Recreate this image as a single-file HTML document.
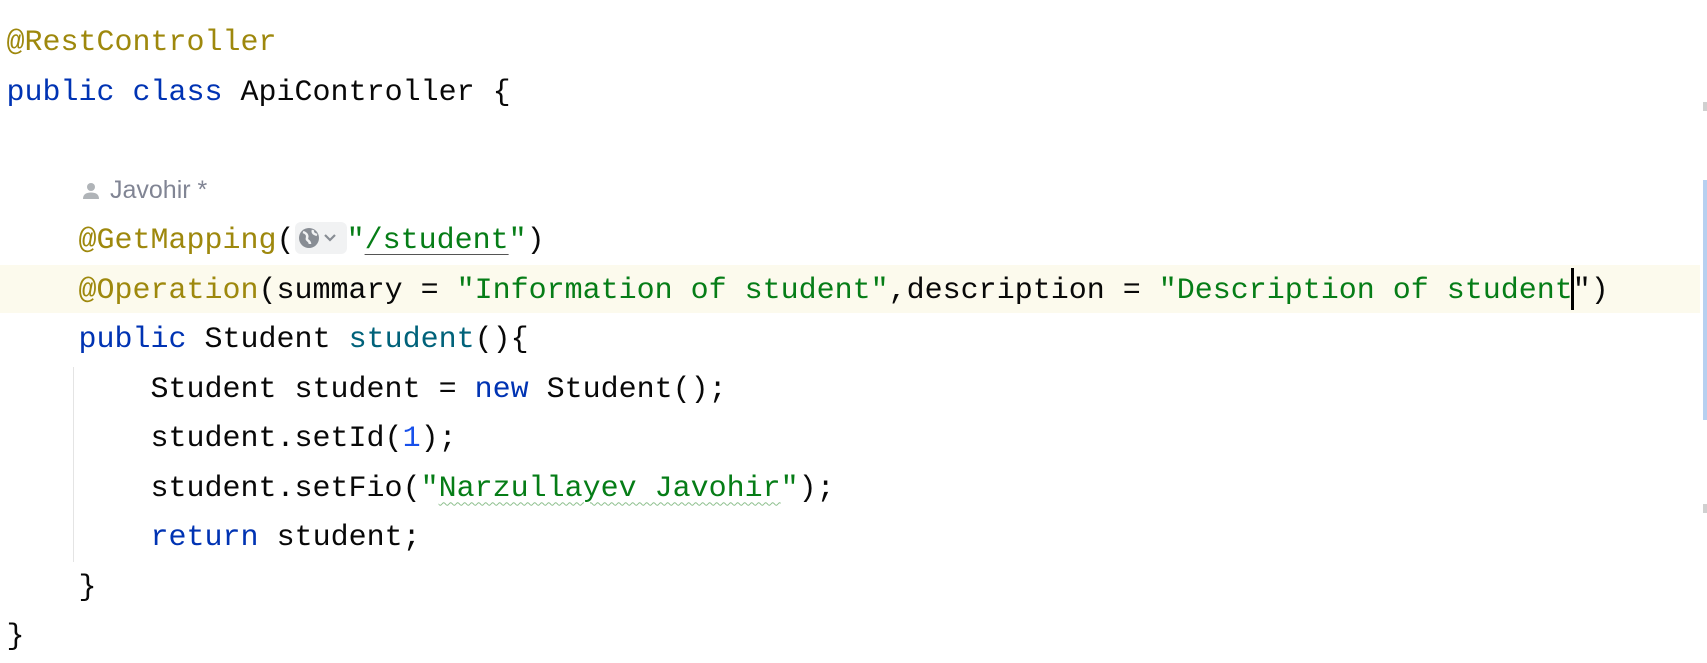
<!DOCTYPE html>
<html><head><style>
html,body{margin:0;padding:0;background:#fff;width:1707px;height:662px;overflow:hidden}
.l{position:absolute;left:6.5px;height:49.5px;line-height:49.5px;font-family:"Liberation Mono",monospace;font-size:30px;color:#080808;white-space:pre}
.a{color:#9E880D}.k{color:#0033B3}.s{color:#067D17}.n{color:#1750EB}.m{color:#00627A}
.hl{position:absolute;left:0;width:1700px;top:264.5px;height:48px;background:#FCFAED}
.wav{text-decoration:underline wavy #8dbf8d;text-decoration-thickness:1px;text-underline-offset:6px}
</style></head><body>
<div class="hl"></div>
<div class="l a" style="top:19px">@RestController</div>
<div class="l" style="top:68.5px"><span class="k">public class </span>ApiController {</div>
<div style="position:absolute;left:82px;top:182px;width:18px;height:18px">
<svg width="18" height="18" viewBox="0 0 18 18"><circle cx="9" cy="5" r="4" fill="#b0b4b8"/><path d="M1 17c0-5 3.5-6.5 8-6.5s8 1.5 8 6.5z" fill="#b0b4b8"/></svg></div>
<div style="position:absolute;left:110px;top:176px;font-family:'Liberation Sans',sans-serif;font-size:25px;color:#818594">Javohir *</div>
<div class="l" style="top:217px"><span class="a">    @GetMapping</span>(<span style="display:inline-block;width:52px;height:32px;vertical-align:-6px;background:#f1f2f3;border-radius:6px;position:relative"><svg style="position:absolute;left:2px;top:4px" width="48" height="24" viewBox="0 0 48 24"><circle cx="12" cy="12" r="10" fill="#888d94"/><path d="M6 6c3 1 5 3 4 6s3 2 3 6M16 4c-1 3 1 4 4 5" stroke="#f1f2f3" stroke-width="2.5" fill="none"/><path d="M28 9l5 5 5-5" stroke="#888d94" stroke-width="2.2" fill="none"/></svg></span><span class="s">"<span style="text-decoration:underline;text-underline-offset:6px;text-decoration-color:#555;text-decoration-thickness:1px">/student</span>"</span>)</div>
<div class="l" style="top:266.5px"><span class="a">    @Operation</span>(summary = <span class="s">"Information of student"</span>,description = <span class="s">"Description of student</span>")</div>
<div style="position:absolute;left:1571px;top:268px;width:3px;height:42px;background:#000"></div>
<div class="l" style="top:316px">    <span class="k">public </span>Student <span class="m">student</span>(){</div>
<div class="l" style="top:365.5px">        Student student = <span class="k">new </span>Student();</div>
<div class="l" style="top:415px">        student.setId(<span class="n">1</span>);</div>
<div class="l" style="top:464.5px">        student.setFio(<span class="s">"<span class="wav">Narzullayev Javohir</span>"</span>);</div>
<div class="l" style="top:514px">        <span class="k">return </span>student;</div>
<div class="l" style="top:563.5px">    }</div>
<div class="l" style="top:613px">}</div>
<div style="position:absolute;left:73px;top:367px;width:1px;height:195px;background:#e4e4e4"></div>
<div style="position:absolute;left:1703px;top:102px;width:4px;height:9px;background:#d0d0d0"></div>
<div style="position:absolute;left:1703px;top:180px;width:4px;height:240px;background:#b7d0f0"></div>
<div style="position:absolute;left:1703px;top:504px;width:4px;height:9px;background:#d0d0d0"></div>
</body></html>
